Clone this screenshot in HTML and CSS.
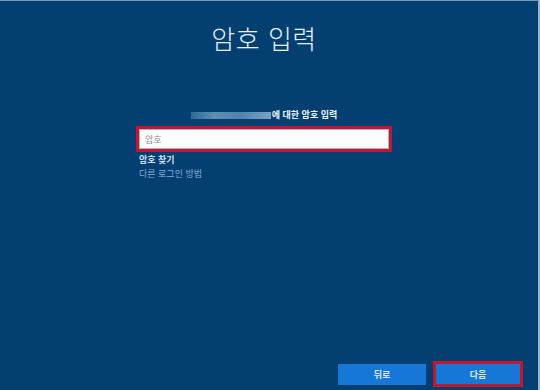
FILE: index.html
```html
<!DOCTYPE html>
<html lang="ko">
<head>
    <meta charset="UTF-8">
    <meta name="viewport" content="width=device-width, initial-scale=1.0">
    <title>암호 입력</title>
    <link rel="stylesheet" href="styles.css">
</head>
<body>
    <div class="screen">
        <h1 class="title">암호 입력</h1>

        <div class="signin">
            <p class="for-user"><span class="user-blur"></span>에 대한 암호 입력</p>

            <!-- red box marks the field to fill -->
            <div class="mark">
                <input type="password" class="pw" placeholder="암호">
            </div>

            <a class="link" href="#">암호 찾기</a>
            <a class="link other" href="#">다른 로그인 방법</a>
        </div>

        <div class="actions">
            <button type="button" class="btn">뒤로</button>
            <span class="mark btn-mark">
                <button type="button" class="btn">다음</button>
            </span>
        </div>
    </div>
</body>
</html>
```

FILE: styles.css
```css
body {
    margin: 0;
    width: 540px;
    height: 390px;
    overflow: hidden;
    background-color: #043f72;
    font-family: "Noto Sans CJK KR", "Noto Sans", sans-serif;
    color: white;
}

.screen {
    box-sizing: border-box;
    height: 390px;
    display: flex;
    flex-direction: column;
    border-top: 1px solid #7c99b6;
    border-right: 2px solid #9db4cc;
}

.title {
    margin: 19px 0 0 -10px;
    text-align: center;
    font-size: 26px;
    font-weight: 300;
    line-height: 36px;
    letter-spacing: 0.5px;
    color: #e9f0f8;
}

.signin {
    margin: 52px 0 0 139px;
    width: 250px;
    display: flex;
    flex-direction: column;
}

.for-user {
    margin: 0 0 4px;
    text-align: center;
    font-size: 9px;
    font-weight: bold;
    line-height: 14px;
    color: #eef4fa;
}

.user-blur {
    display: inline-block;
    width: 80px;
    height: 7px;
    margin-right: 1px;
    vertical-align: -1px;
    background: linear-gradient(90deg, #2f6a99, #5f8fb6 30%, #4f82ad 60%, #7aa2c4);
}

.mark {
    border: 3px solid #c1172f;
}

.signin .mark {
    margin-left: -3px;
    width: 250px;
}

.pw {
    display: block;
    box-sizing: border-box;
    width: 250px;
    height: 20px;
    margin: 0;
    padding: 0 5px;
    border: 1px solid #a9b3c4;
    background: #fdfdfe;
    font-family: inherit;
    font-size: 9px;
    color: #333;
    outline: none;
}

.pw::placeholder {
    color: #8b8f96;
}

.link {
    font-size: 9px;
    font-weight: bold;
    line-height: 14px;
    color: #cfe0f3;
    text-decoration: none;
}

.signin .mark + .link {
    margin-top: 1px;
}

.link.other {
    font-weight: normal;
    color: #86acd8;
}

.actions {
    margin-top: auto;
    padding: 0 15px 3px 0;
    display: flex;
    justify-content: flex-end;
    align-items: center;
    gap: 7px;
}

.btn {
    width: 88px;
    height: 21px;
    margin: 0;
    padding: 0;
    border: none;
    background-color: #1777d6;
    color: #d7e7f8;
    font-family: inherit;
    font-size: 9px;
    font-weight: bold;
    cursor: pointer;
}

.btn-mark {
    display: block;
}

.btn-mark .btn {
    display: block;
    width: 84px;
    height: 20px;
}
```
